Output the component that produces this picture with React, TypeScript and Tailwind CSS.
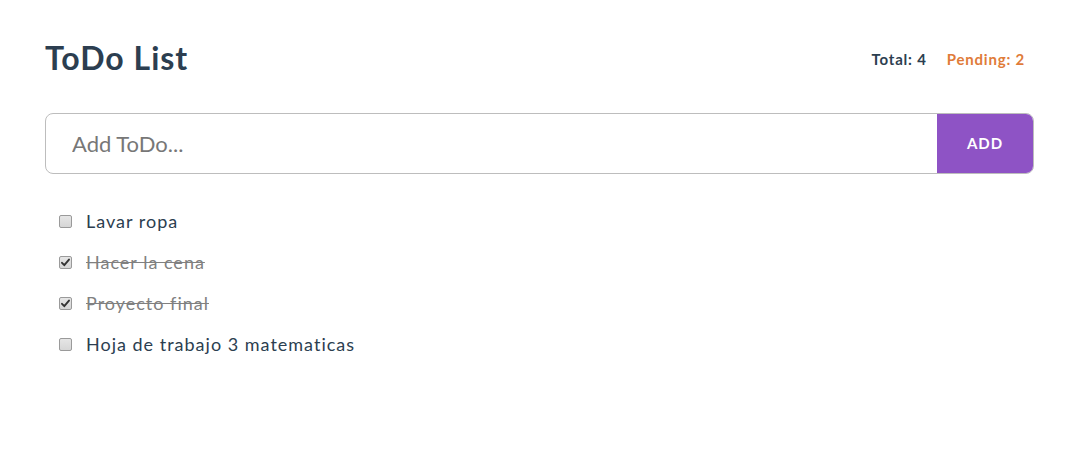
import { useState } from 'react'

interface Todo {
  id: number
  text: string
  done: boolean
}

const initial: Todo[] = [
  { id: 1, text: 'Lavar ropa', done: false },
  { id: 2, text: 'Hacer la cena', done: true },
  { id: 3, text: 'Proyecto final', done: true },
  { id: 4, text: 'Hoja de trabajo 3 matematicas', done: false },
]

export default function App() {
  const [todos, setTodos] = useState<Todo[]>(initial)
  const [text, setText] = useState('')

  const pending = todos.filter(t => !t.done).length

  const add = () => {
    if (!text.trim()) return
    setTodos([...todos, { id: Date.now(), text: text.trim(), done: false }])
    setText('')
  }

  const toggle = (id: number) =>
    setTodos(todos.map(x => (x.id === id ? { ...x, done: !x.done } : x)))

  return (
    <div className="min-h-screen bg-white pl-[45px] pr-[41px] pt-[34px]" style={{ fontFamily: 'Lato, "Noto Sans", sans-serif' }}>
      <div className="flex items-center justify-between">
        <h1 className="text-[32px] font-bold text-[#2c3e50] tracking-[1px]">ToDo List</h1>
        <div className="flex gap-[20px] pr-[9px] pt-[2px] text-[15px] font-bold tracking-[0.8px]">
          <span className="text-[#2c3e50]">Total: {todos.length}</span>
          <span className="text-[#e07b39]">Pending: {pending}</span>
        </div>
      </div>

      <div className="mt-[31px] flex h-[61px] overflow-hidden rounded-lg border border-[#bdbdbd]">
        <input
          className="flex-1 px-[26px] text-[22px] text-[#2c3e50] placeholder-[#777] outline-none"
          placeholder="Add ToDo..."
          value={text}
          onChange={e => setText(e.target.value)}
          onKeyDown={e => { if (e.key === 'Enter') add() }}
        />
        <button
          onClick={add}
          className="w-[96px] bg-[#8e53c5] text-[15px] font-bold tracking-[1px] text-white"
        >
          ADD
        </button>
      </div>

      <ul className="mt-[27px] pl-[14px]">
        {todos.map(t => (
          <li key={t.id} className="flex h-[41px] items-center gap-[14px]">
            <label className="relative flex h-[13px] w-[13px] cursor-pointer">
              <input
                type="checkbox"
                checked={t.done}
                onChange={() => toggle(t.id)}
                className="h-[13px] w-[13px] cursor-pointer appearance-none rounded-[2px] border border-[#9a9a9a] bg-gradient-to-b from-[#e6e6e6] to-[#d6d6d6]"
              />
              {t.done && (
                <svg viewBox="0 0 13 13" className="pointer-events-none absolute inset-0 h-[13px] w-[13px]">
                  <path d="M3 6.8 L5.3 9.2 L10 3.6" fill="none" stroke="#333" strokeWidth="1.9" strokeLinecap="round" strokeLinejoin="round" />
                </svg>
              )}
            </label>
            <span
              className={
                t.done
                  ? 'text-[18px] tracking-[1px] text-[#808080] line-through'
                  : 'text-[18px] tracking-[1px] text-[#2c3e50]'
              }
            >
              {t.text}
            </span>
          </li>
        ))}
      </ul>
    </div>
  )
}
